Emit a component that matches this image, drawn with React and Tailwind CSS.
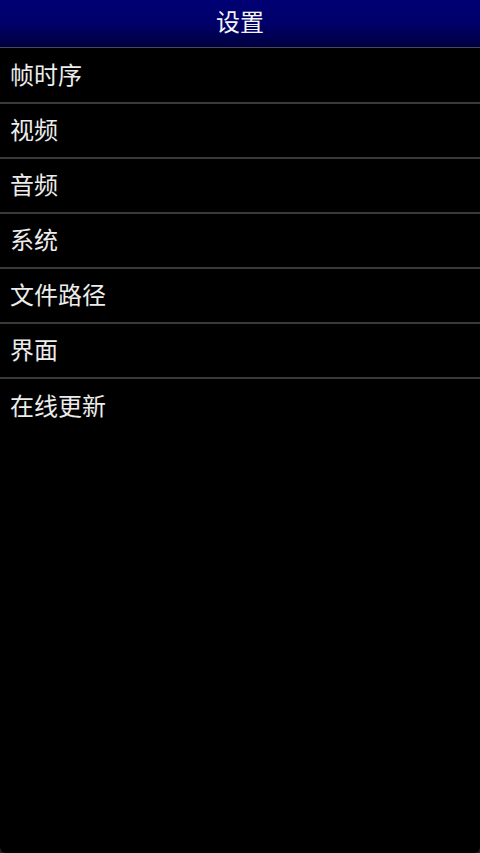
import React from 'react';

const items = ['帧时序', '视频', '音频', '系统', '文件路径', '界面', '在线更新'];

const font = { fontFamily: '"Noto Sans CJK SC", "Noto Sans", sans-serif' };

export default function App() {
  return (
    <div className="w-[480px] h-[853px] bg-[#202020]" style={font}>
      <div className="h-full bg-black rounded-b-[6px] overflow-hidden flex flex-col">
        {/* title bar */}
        <div className="h-[48px] shrink-0 flex items-center justify-center pb-[5px] bg-gradient-to-b from-[#000074] via-[#00006a] to-[#000040] border-b border-[#4a4a5a]">
          <span className="text-[24px] leading-none text-[#f4f4f4]">设置</span>
        </div>

        {/* menu list */}
        <ul className="flex flex-col mt-[1px]">
          {items.map((label, i) => (
            <li
              key={label}
              className={
                i < items.length - 1
                  ? 'h-[55px] flex items-center pl-[10px] pb-[3px] border-b-2 border-[#3a3a3a]'
                  : 'h-[55px] flex items-center pl-[10px] pb-[3px]'
              }
            >
              <span className="text-[24px] leading-none text-[#ececec]">{label}</span>
            </li>
          ))}
        </ul>
      </div>
    </div>
  );
}
